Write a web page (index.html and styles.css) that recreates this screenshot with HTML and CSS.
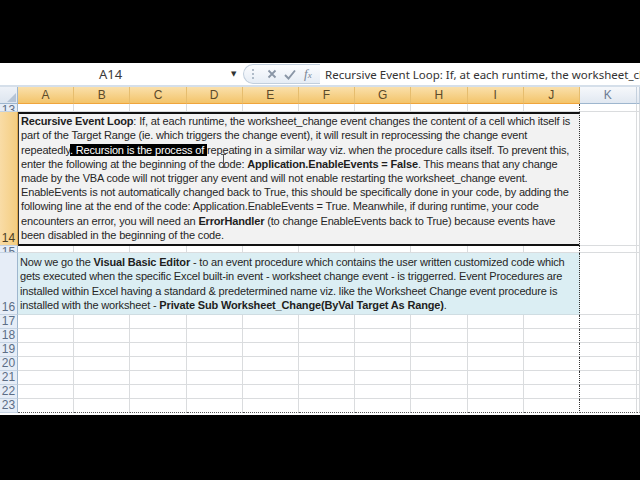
FILE: index.html
```html
<!DOCTYPE html>
<html>
<head>
<meta charset="utf-8">
<link rel="stylesheet" href="styles.css">
</head>
<body>
<div class="screen">
  <div class="band"></div>
  <div class="fbar">
    <div class="namebox"><span class="ref">A14</span><span class="dd">&#9660;</span></div>
    <div class="btns">
      <svg class="grip" width="4" height="12" viewBox="0 0 4 12"><circle cx="2" cy="2" r="1" fill="#9aa8b8"/><circle cx="2" cy="6" r="1" fill="#9aa8b8"/><circle cx="2" cy="10" r="1" fill="#9aa8b8"/></svg>
      <svg class="ico" width="10" height="10" viewBox="0 0 10 10"><path d="M1.5 1.5 L8.5 8.5 M8.5 1.5 L1.5 8.5" stroke="#8a96a6" stroke-width="1.8" fill="none"/></svg>
      <svg class="ico" width="12" height="11" viewBox="0 0 12 11"><path d="M1 6 L4.5 9.5 L11 1.5" stroke="#8a96a6" stroke-width="1.9" fill="none"/></svg>
      <span class="fx">f<i>x</i></span>
    </div>
    <div class="formula">Recursive Event Loop: If, at each runtime, the worksheet_change event changes the content of a cell which itself is</div>
  </div>
  <div class="sep"></div>
  <div class="sheet">
    <div class="row hdr">
      <div class="corner"><svg width="9" height="9" viewBox="0 0 9 9"><path d="M9 0 L9 9 L0 9 Z" fill="#b5c4d6"/></svg></div>
      <div class="ch sel">A</div><div class="ch sel">B</div><div class="ch sel">C</div><div class="ch sel">D</div><div class="ch sel">E</div>
      <div class="ch sel">F</div><div class="ch sel">G</div><div class="ch sel">H</div><div class="ch sel">I</div><div class="ch sel">J</div>
      <div class="ch">K</div><div class="ch"></div>
    </div>
    <div class="row r13">
      <div class="rh top">13</div>
      <div class="c"></div><div class="c"></div><div class="c"></div><div class="c"></div><div class="c"></div>
      <div class="c"></div><div class="c"></div><div class="c"></div><div class="c"></div><div class="c pb"></div>
      <div class="c"></div><div class="c"></div>
    </div>
    <div class="row r14">
      <div class="rh selrow">14</div>
      <div class="m m14">
        <p class="txt">
          <b>Recursive Event Loop</b>: If, at each runtime, the worksheet_change event changes the content of a cell which itself is<br>
          part of the Target Range (ie. which triggers the change event), it will result in reprocessing the change event<br>
          repeatedly<mark>. Recursion is the process of </mark>repeating in a similar way viz. when the procedure calls itself. To prevent this,<br>
          enter the following at the beginning of the code: <b>Application.EnableEvents = False</b>. This means that any change<br>
          made by the VBA code will not trigger any event and will not enable restarting the worksheet_change event.<br>
          EnableEvents is not automatically changed back to True, this should be specifically done in your code, by adding the<br>
          following line at the end of the code: Application.EnableEvents = True. Meanwhile, if during runtime, your code<br>
          encounters an error, you will need an <b>ErrorHandler</b> (to change EnableEvents back to True) because events have<br>
          been disabled in the beginning of the code.
        </p>
      </div>
      <div class="c"></div><div class="c"></div>
    </div>
    <div class="row r15">
      <div class="rh top">15</div>
      <div class="c"></div><div class="c"></div><div class="c"></div><div class="c"></div><div class="c"></div>
      <div class="c"></div><div class="c"></div><div class="c"></div><div class="c"></div><div class="c pb"></div>
      <div class="c"></div><div class="c"></div>
    </div>
    <div class="row r16">
      <div class="rh">16</div>
      <div class="m m16">
        <p class="txt">
          Now we go the <b>Visual Basic Editor</b> - to an event procedure which contains the user written customized code which<br>
          gets executed when the specific Excel built-in event - worksheet change event - is triggerred. Event Procedures are<br>
          installed within Excel having a standard &amp; predetermined name viz. like the Worksheet Change event procedure is<br>
          installed with the worksheet - <b>Private Sub Worksheet_Change(ByVal Target As Range)</b>.
        </p>
      </div>
      <div class="c"></div><div class="c"></div>
    </div>
    <div class="row rn">
      <div class="rh">17</div>
      <div class="c"></div><div class="c"></div><div class="c"></div><div class="c"></div><div class="c"></div>
      <div class="c"></div><div class="c"></div><div class="c"></div><div class="c"></div><div class="c pb"></div>
      <div class="c"></div><div class="c"></div>
    </div>
    <div class="row rn">
      <div class="rh">18</div>
      <div class="c"></div><div class="c"></div><div class="c"></div><div class="c"></div><div class="c"></div>
      <div class="c"></div><div class="c"></div><div class="c"></div><div class="c"></div><div class="c pb"></div>
      <div class="c"></div><div class="c"></div>
    </div>
    <div class="row rn">
      <div class="rh">19</div>
      <div class="c"></div><div class="c"></div><div class="c"></div><div class="c"></div><div class="c"></div>
      <div class="c"></div><div class="c"></div><div class="c"></div><div class="c"></div><div class="c pb"></div>
      <div class="c"></div><div class="c"></div>
    </div>
    <div class="row rn">
      <div class="rh">20</div>
      <div class="c"></div><div class="c"></div><div class="c"></div><div class="c"></div><div class="c"></div>
      <div class="c"></div><div class="c"></div><div class="c"></div><div class="c"></div><div class="c pb"></div>
      <div class="c"></div><div class="c"></div>
    </div>
    <div class="row rn">
      <div class="rh">21</div>
      <div class="c"></div><div class="c"></div><div class="c"></div><div class="c"></div><div class="c"></div>
      <div class="c"></div><div class="c"></div><div class="c"></div><div class="c"></div><div class="c pb"></div>
      <div class="c"></div><div class="c"></div>
    </div>
    <div class="row rn">
      <div class="rh">22</div>
      <div class="c"></div><div class="c"></div><div class="c"></div><div class="c"></div><div class="c"></div>
      <div class="c"></div><div class="c"></div><div class="c"></div><div class="c"></div><div class="c pb"></div>
      <div class="c"></div><div class="c"></div>
    </div>
    <div class="row rn last">
      <div class="rh">23</div>
      <div class="c"></div><div class="c"></div><div class="c"></div><div class="c"></div><div class="c"></div>
      <div class="c"></div><div class="c"></div><div class="c"></div><div class="c"></div><div class="c pb"></div>
      <div class="c"></div><div class="c"></div>
    </div>
    <div class="tail"></div>
  </div>
  <svg class="ibeam" width="7" height="14" viewBox="0 0 7 14"><path d="M1 0.5 H6 M3.5 0.5 V13.5 M1 13.5 H6" stroke="#555" stroke-width="1" fill="none"/></svg>
</div>
</body>
</html>
```
FILE: styles.css
```css
* { box-sizing: border-box; }
html, body { margin: 0; padding: 0; background: #000; }
.screen {
  width: 640px; height: 480px; background: #000;
  display: flex; flex-direction: column; overflow: hidden; position: relative;
}
.band { height: 63px; flex: none; }
.fbar {
  height: 22px; flex: none; background: #fff;
  display: flex; align-items: center;
}
.namebox { width: 243px; height: 100%; display: flex; align-items: center; }
.ref {
  flex: 1; text-align: center; padding-right: 10px;
  font: 13px "Noto Sans", "DejaVu Sans", sans-serif; color: #3a3a3a;
}
.dd { width: 12px; font-size: 7px; color: #333; font-family: "DejaVu Sans", sans-serif; }
.btns {
  width: 77px; height: 20px; margin-right: 2px;
  border: 1px solid #c2cfdd; border-right: none;
  border-radius: 10px 0 0 10px;
  background: linear-gradient(#fbfcfe, #e6edf5);
  display: flex; align-items: center; gap: 7px; padding-left: 7px;
}
.grip { margin-right: 5px; }
.fx {
  font: italic 13px "Liberation Serif", serif; color: #7a8696; margin-left: 1px;
}
.fx i { font-size: 9px; }
.formula {
  flex: 1; white-space: nowrap; overflow: hidden; padding-left: 3px;
  font: 11.5px "Noto Sans", "DejaVu Sans", sans-serif; color: #333;
}
.sep { height: 2px; flex: none; background: #d5dfea; }
.sheet { flex: none; background: #fff; display: flex; flex-direction: column; }
.row {
  display: grid;
  grid-template-columns: 18px repeat(10, 56.2px) 57px 1fr;
}
.hdr { height: 17px; }
.corner {
  background: linear-gradient(#eef2f8, #dde5ef);
  border-right: 1px solid #9eb6ce; border-bottom: 1px solid #9eb6ce;
  display: flex; align-items: flex-end; justify-content: flex-end; padding: 0 1px 1px 0;
}
.ch {
  display: flex; align-items: center; justify-content: center;
  font: 12px "Liberation Sans", Arial, sans-serif; color: #6d7c94;
  background: linear-gradient(#f6f8fb, #e1e8f1);
  border-right: 1px solid #c5d1de; border-bottom: 1px solid #9eb6ce;
}
.ch.sel {
  color: #5c4a2a;
  background: linear-gradient(#fae0ab, #f3c46a);
  border-right: 1px solid #e6bd6e; border-bottom: 1px solid #f0a53c;
}
.rh {
  background: #e6edf7;
  border-right: 1px solid #9eb6ce; border-bottom: 1px solid #c5d3e3;
  font: 12px "Liberation Sans", Arial, sans-serif; color: #5c6d86;
  display: flex; align-items: flex-end; justify-content: center;
  overflow: hidden; line-height: 13px;
}
.rh.top { align-items: flex-start; }
.rh.selrow { background: linear-gradient(90deg, #f9dca6, #f4cd80); color: #4d3e22; border-right-color: #e0a94e; }
.c { border-right: 1px solid #dadcde; border-bottom: 1px solid #dadcde; }
.c.pb { border-right: 1px dotted #333; }
.r13 { height: 8px; }
.r14 { height: 134px; }
.r15 { height: 7px; }
.r16 { height: 62px; }
.rn { height: 14px; }
.last .c { border-bottom: 1px dotted #555; }
.tail { height: 2px; }
.m {
  grid-column: span 10;
  display: flex; flex-direction: column; justify-content: flex-end;
  padding: 0 0 2px 2px; overflow: hidden;
}
.m14 {
  background: #f2f2f2;
  border-top: 2px solid #111; border-bottom: 2px solid #111; border-left: 1px solid #333;
  border-right: 1px dotted #333;
}
.m16 {
  background: #dbeef3;
  border-bottom: 1px solid #cfdde2; border-right: 1px dotted #333;
}
.txt {
  margin: 0; white-space: nowrap;
  font: 11px/14.2px "Liberation Sans", Arial, sans-serif; color: #262626;
  letter-spacing: -0.16px;
}
.txt b { color: #1e1e1e; }
mark { background: #000; color: #fff; }
.ibeam { position: absolute; left: 220px; top: 154px; }
```
